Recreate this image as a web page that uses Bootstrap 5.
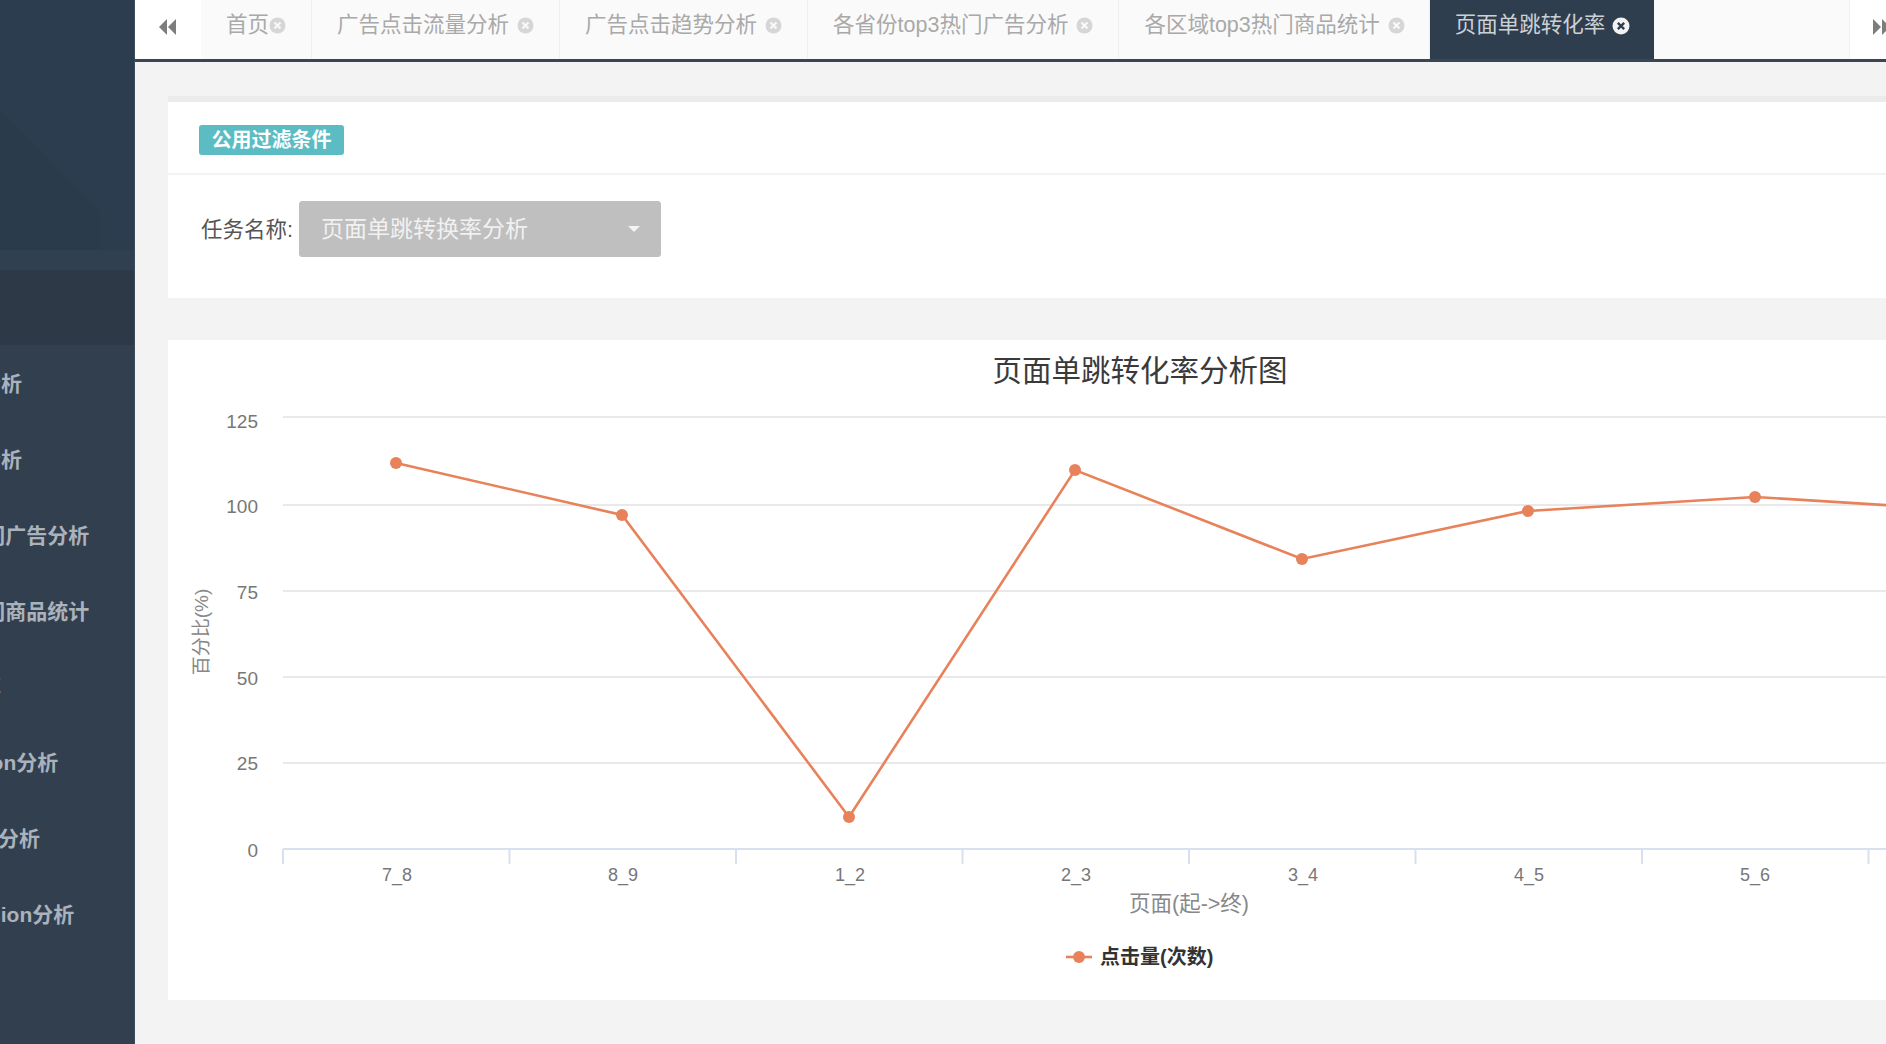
<!DOCTYPE html>
<html lang="zh-CN">
<head>
<meta charset="utf-8">
<title>页面单跳转化率</title>
<link href="https://cdn.jsdelivr.net/npm/bootstrap@5.3.0/dist/css/bootstrap.min.css" rel="stylesheet">
<style>
html,body{height:100%;}
body{font-family:"Liberation Sans","Noto Sans CJK SC",sans-serif;background:#f3f3f3;overflow:hidden;}
.app-shell{width:1886px;height:1044px;}
.side-panel{width:135px;flex:none;background:#323f4f;overflow:hidden;border-right:1px solid #3f4c5c;}
.side-top{height:250px;background:#2b3d4e;}
.side-top svg{display:block;}
.side-band{height:20px;background:#314050;}
.side-dark{height:75px;background:#2e3947;}
.side-list{list-style:none;margin:0;padding:1px 0 0;}
.side-list li{height:75.8px;display:flex;align-items:center;white-space:nowrap;font-size:21px;font-weight:700;color:#aab2bb;margin-left:-146px;}
.side-list li.shift-d{margin-left:-144px;}
.side-list li.shift-a{margin-left:-146px;}
.side-list li.shift-b{margin-left:-107px;}
.side-list li.shift-c{margin-left:-144px;}
.work-area{flex:1 1 auto;min-width:0;overflow:hidden;}
.tab-bar{height:62px;background:#fff;border-bottom:3px solid #3a4656;}
.tab-arrow{width:66px;flex:none;justify-content:center;padding-bottom:6px;}
.tab-arrow-end{width:37px;flex:none;padding:0 0 6px 22px;border-left:1px solid #f0f0f0;background:#fff;overflow:hidden;}
.tab-arrow-end svg{flex:none;}
.tab-strip{flex:1 1 auto;background:#fafafa;}
.tab-item{height:59px;padding:0 25px 8px;gap:8px;font-size:21.5px;color:#a9a9a9;border-right:1px solid #efefef;white-space:nowrap;line-height:1;}
.tab-item.tab-first{gap:0;padding-right:25px;}
.tab-item.tab-last-plain{padding-right:24px;}
.tab-item.tab-on{background:#2f3e4e;color:#ccd1d6;border-right:0;padding-right:24px;gap:7px;}
.tab-x{width:17px;height:17px;flex:none;}
.tab-on .tab-x{width:18px;height:18px;}
.page-pad{padding:34px 0 0 33px;}
.panel-card{border:0;border-radius:0;border-top:6px solid #ebebeb;background:#fff;}
.panel-card.chart-panel{border-top:0;margin-top:42px;height:660px;}
.filter-head{height:73px;background:#fff;border-bottom:2px solid #f3f3f3;border-radius:0!important;padding:4px 0 0 31px;}
.filter-tag{background:#5bbcc4;color:#fff;font-size:20px;font-weight:700;width:145px;height:30px;padding:0;border-radius:3px;line-height:30px;}
.filter-body{height:123px;padding:0 0 15px 33px;gap:6px;}
.filter-label{font-size:21.5px;color:#555;padding-top:2px;}
.task-select{width:362px;height:56px;background:#bfbfbf;border-color:#bfbfbf;color:#f1f1f1;font-size:23px;border-radius:3px;padding:0 20px 0 21px;opacity:1;}
.task-select:hover,.task-select:disabled{background:#bfbfbf;border-color:#bfbfbf;color:#f1f1f1;opacity:1;}
.caret-mark{width:0;height:0;border-left:6px solid transparent;border-right:6px solid transparent;border-top:6px solid #f4f4f4;}
.chart-svg{display:block;font-family:"Liberation Sans","Noto Sans CJK SC",sans-serif;}
.chart-svg .grid-line{stroke:#e9e9e9;stroke-width:2;}
.chart-svg .axis-line{stroke:#d8dfee;stroke-width:2;fill:none;}
.chart-svg .y-num{font-size:19px;fill:#777;text-anchor:end;}
.chart-svg .x-num{font-size:18px;fill:#777;text-anchor:middle;}
.chart-svg .axis-title{font-size:19px;fill:#888;text-anchor:middle;}
.chart-svg .x-title{font-size:21.5px;}
.chart-svg .chart-title{font-size:29.5px;fill:#3a3a3a;text-anchor:middle;}
.chart-svg .legend-text{font-size:20px;font-weight:700;fill:#333;}
.chart-svg .series{stroke:#e8825a;stroke-width:2.6;fill:none;}
.chart-svg .dot{fill:#e8825a;}
</style>
</head>
<body>
<div class="app-shell d-flex">
  <aside class="side-panel d-flex flex-column">
    <div class="side-top">
      <svg width="135" height="250" viewBox="0 0 135 250"><polygon points="0,110 100,212 100,250 0,250" fill="#2a3c4c"/></svg>
    </div>
    <div class="side-band"></div>
    <div class="side-dark"></div>
    <ul class="side-list">
      <li>广告点击流量分析</li>
      <li>广告点击趋势分析</li>
      <li class="shift-d">各省份top3热门广告分析</li>
      <li class="shift-d">各区域top3热门商品统计</li>
      <li>页面单跳转化率</li>
      <li class="shift-a">用户访问session分析</li>
      <li class="shift-b">用户活跃度分析</li>
      <li class="shift-c">top10活跃session分析</li>
    </ul>
  </aside>
  <main class="work-area d-flex flex-column">
    <nav class="tab-bar d-flex">
      <div class="tab-arrow d-flex align-items-center">
        <svg width="20" height="18" viewBox="0 0 20 18" aria-hidden="true"><polygon points="9,1 1,9 9,17" fill="#7d7d7d"/><polygon points="18,1 10,9 18,17" fill="#7d7d7d"/></svg>
      </div>
      <div class="tab-strip d-flex">
        <div class="tab-item tab-first d-flex align-items-center">首页<svg class="tab-x" viewBox="0 0 17 17"><circle cx="8.5" cy="8.5" r="8" fill="#d6d6d6"/><path d="M5.5 5.5l6 6M11.5 5.5l-6 6" stroke="#fafafa" stroke-width="2"/></svg></div>
        <div class="tab-item d-flex align-items-center">广告点击流量分析<svg class="tab-x" viewBox="0 0 17 17"><circle cx="8.5" cy="8.5" r="8" fill="#d6d6d6"/><path d="M5.5 5.5l6 6M11.5 5.5l-6 6" stroke="#fafafa" stroke-width="2"/></svg></div>
        <div class="tab-item d-flex align-items-center">广告点击趋势分析<svg class="tab-x" viewBox="0 0 17 17"><circle cx="8.5" cy="8.5" r="8" fill="#d6d6d6"/><path d="M5.5 5.5l6 6M11.5 5.5l-6 6" stroke="#fafafa" stroke-width="2"/></svg></div>
        <div class="tab-item d-flex align-items-center">各省份top3热门广告分析<svg class="tab-x" viewBox="0 0 17 17"><circle cx="8.5" cy="8.5" r="8" fill="#d6d6d6"/><path d="M5.5 5.5l6 6M11.5 5.5l-6 6" stroke="#fafafa" stroke-width="2"/></svg></div>
        <div class="tab-item tab-last-plain d-flex align-items-center">各区域top3热门商品统计<svg class="tab-x" viewBox="0 0 17 17"><circle cx="8.5" cy="8.5" r="8" fill="#d6d6d6"/><path d="M5.5 5.5l6 6M11.5 5.5l-6 6" stroke="#fafafa" stroke-width="2"/></svg></div>
        <div class="tab-item tab-on d-flex align-items-center">页面单跳转化率<svg class="tab-x" viewBox="0 0 17 17"><circle cx="8.5" cy="8.5" r="8" fill="#f2f2f2"/><path d="M5.5 5.5l6 6M11.5 5.5l-6 6" stroke="#2f3e4e" stroke-width="2.2"/></svg></div>
      </div>
      <div class="tab-arrow-end d-flex align-items-center">
        <svg width="23" height="18" viewBox="0 0 23 18" aria-hidden="true"><polygon points="1,1 9,9 1,17" fill="#7d7d7d"/><polygon points="10,1 18,9 10,17" fill="#7d7d7d"/><rect x="18" y="1" width="3" height="16" fill="#7d7d7d"/></svg>
      </div>
    </nav>
    <div class="page-pad">
      <section class="card panel-card">
        <div class="card-header filter-head d-flex align-items-center">
          <span class="badge filter-tag">公用过滤条件</span>
        </div>
        <div class="card-body filter-body d-flex align-items-center">
          <label class="filter-label">任务名称:</label>
          <button type="button" class="btn task-select d-flex align-items-center justify-content-between">
            <span>页面单跳转换率分析</span><span class="caret-mark"></span>
          </button>
        </div>
      </section>
      <section class="card panel-card chart-panel">
        <svg class="chart-svg" width="1718" height="660" viewBox="168 340 1718 660">
          <text class="chart-title" x="1140" y="381">页面单跳转化率分析图</text>
          <line class="grid-line" x1="283" x2="1886" y1="417" y2="417"/>
          <line class="grid-line" x1="283" x2="1886" y1="505" y2="505"/>
          <line class="grid-line" x1="283" x2="1886" y1="591" y2="591"/>
          <line class="grid-line" x1="283" x2="1886" y1="677" y2="677"/>
          <line class="grid-line" x1="283" x2="1886" y1="763" y2="763"/>
          <path class="axis-line" d="M283 849H1886M283 849V864M509.5 849V864M736 849V864M962.5 849V864M1189 849V864M1415.5 849V864M1642 849V864M1868.5 849V864"/>
          <text class="y-num" x="258" y="428">125</text>
          <text class="y-num" x="258" y="513">100</text>
          <text class="y-num" x="258" y="599">75</text>
          <text class="y-num" x="258" y="685">50</text>
          <text class="y-num" x="258" y="770">25</text>
          <text class="y-num" x="258" y="857">0</text>
          <text class="axis-title" transform="translate(208 632) rotate(-90)">百分比(%)</text>
          <text class="x-num" x="397" y="881">7_8</text>
          <text class="x-num" x="623" y="881">8_9</text>
          <text class="x-num" x="850" y="881">1_2</text>
          <text class="x-num" x="1076" y="881">2_3</text>
          <text class="x-num" x="1303" y="881">3_4</text>
          <text class="x-num" x="1529" y="881">4_5</text>
          <text class="x-num" x="1755" y="881">5_6</text>
          <text class="axis-title x-title" x="1189" y="911">页面(起-&gt;终)</text>
          <polyline class="series" points="396,463 622,515 849,817 1075,470 1302,559 1528,511 1755,497 1981,511"/>
          <circle class="dot" cx="396" cy="463" r="6"/>
          <circle class="dot" cx="622" cy="515" r="6"/>
          <circle class="dot" cx="849" cy="817" r="6"/>
          <circle class="dot" cx="1075" cy="470" r="6"/>
          <circle class="dot" cx="1302" cy="559" r="6"/>
          <circle class="dot" cx="1528" cy="511" r="6"/>
          <circle class="dot" cx="1755" cy="497" r="6"/>
          <line class="series" x1="1066" x2="1092" y1="957" y2="957"/>
          <circle class="dot" cx="1079" cy="957" r="6"/>
          <text class="legend-text" x="1100" y="964">点击量(次数)</text>
        </svg>
      </section>
    </div>
  </main>
</div>
<script src="https://cdn.jsdelivr.net/npm/bootstrap@5.3.0/dist/js/bootstrap.bundle.min.js"></script>
</body>
</html>
